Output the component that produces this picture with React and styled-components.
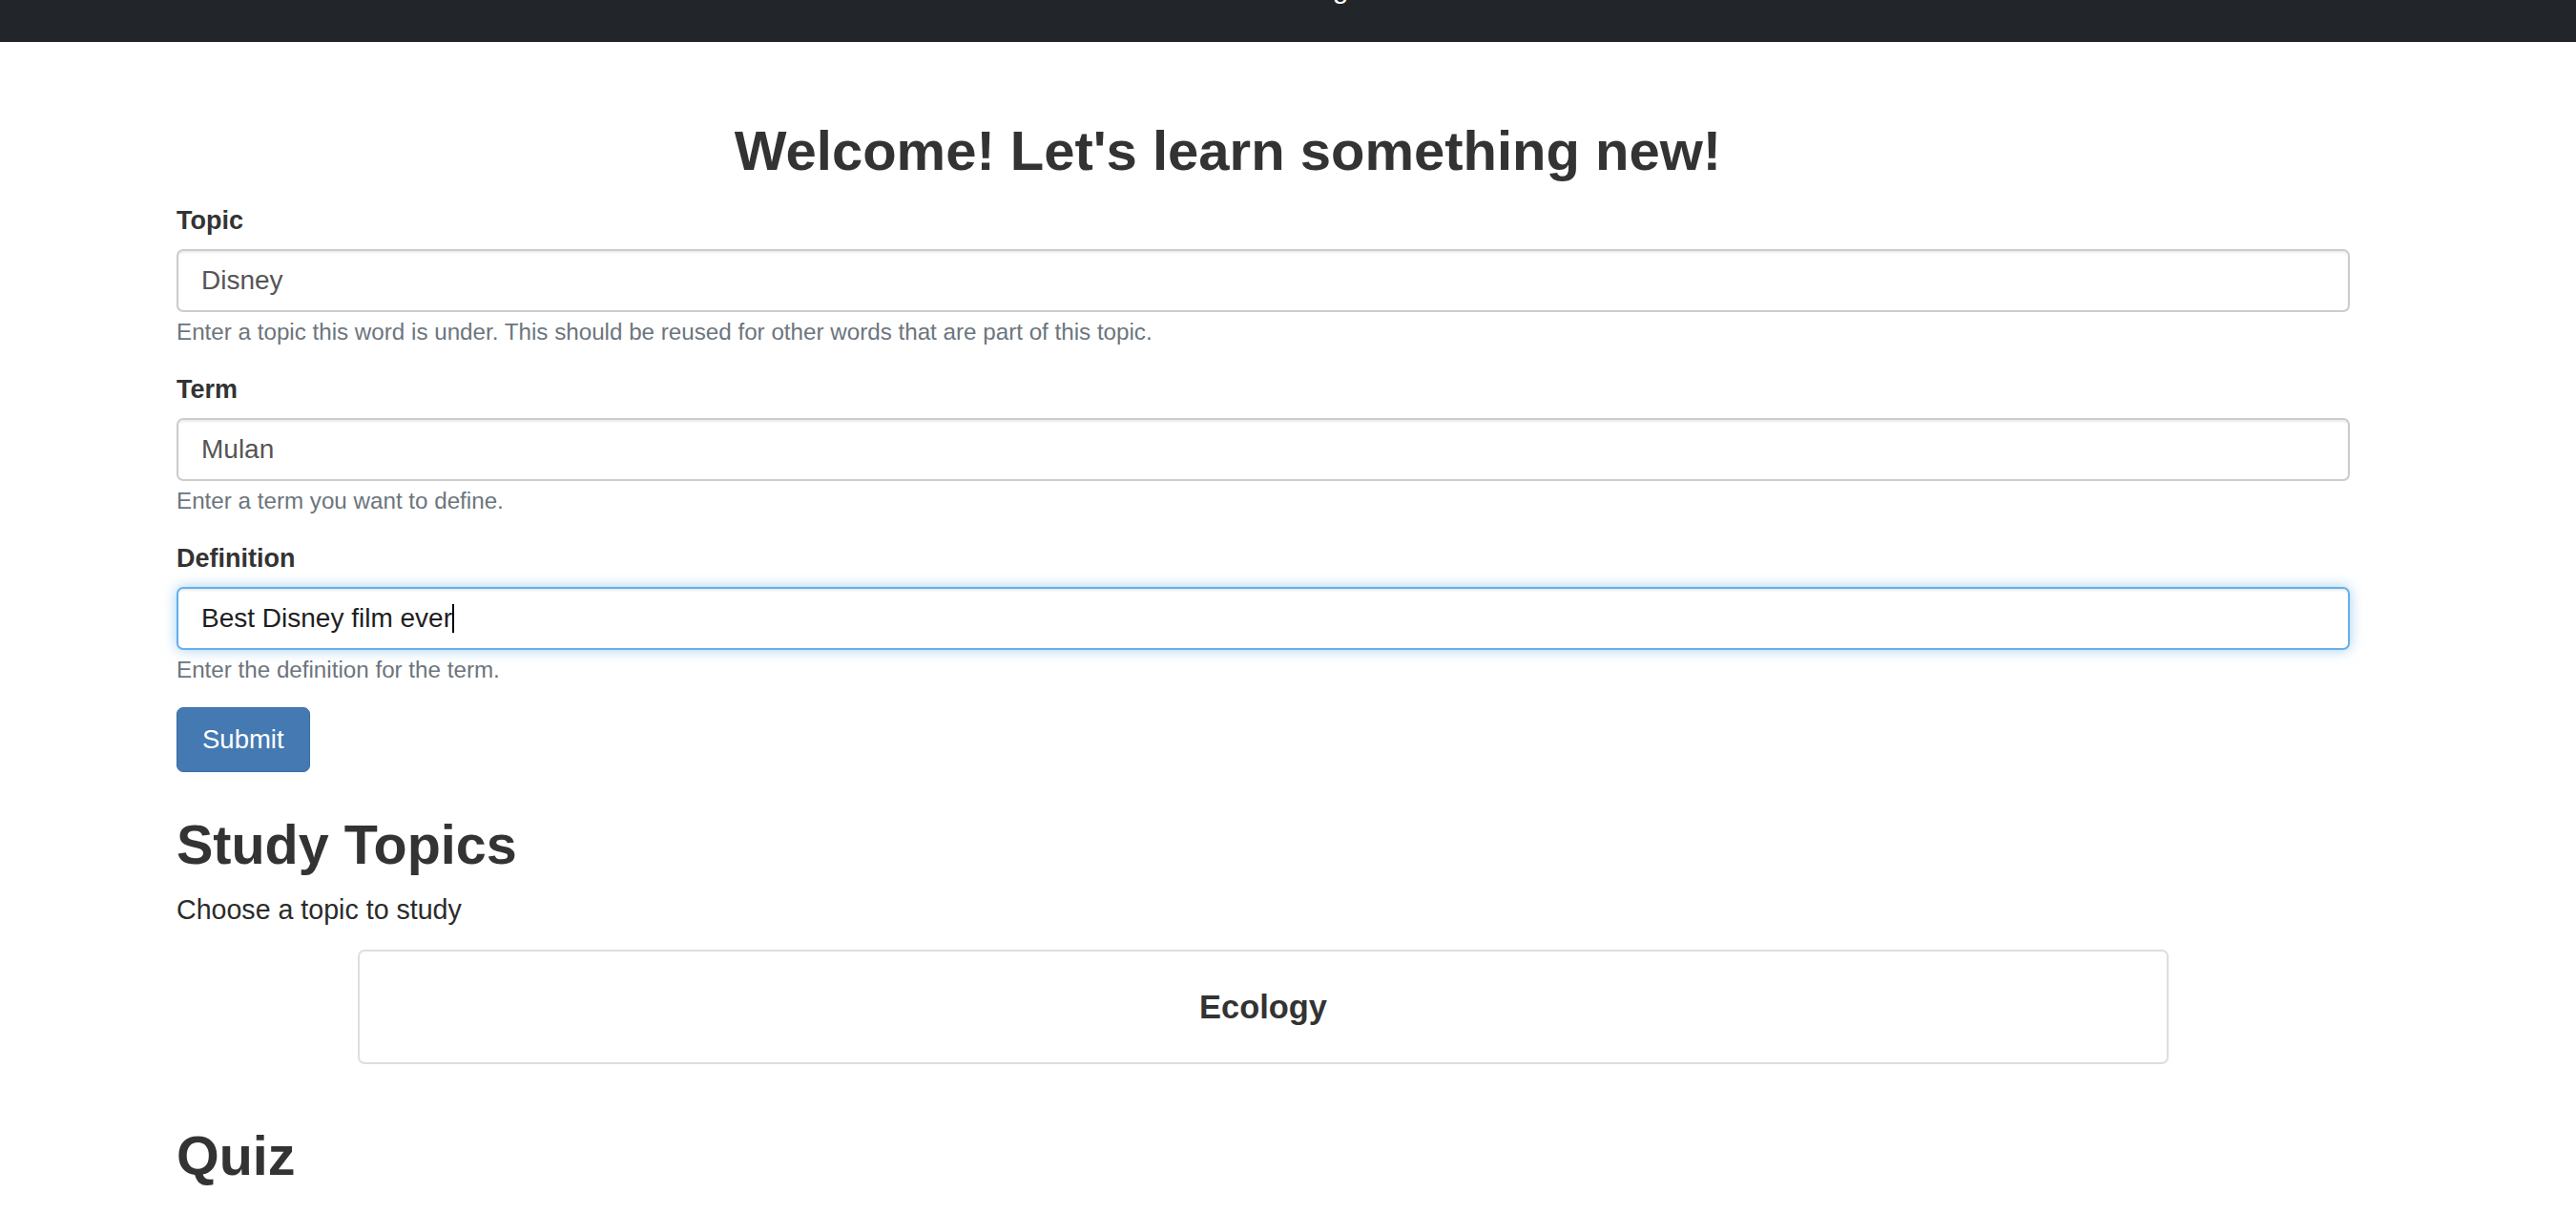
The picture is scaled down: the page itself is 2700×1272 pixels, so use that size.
import React, { useLayoutEffect, useState } from "react";
import styled, { createGlobalStyle, css } from "styled-components";

const FONT = `"Liberation Sans", Arial, Helvetica, sans-serif`;

const GlobalStyle = createGlobalStyle`
  html, body {
    margin: 0;
    padding: 0;
    background: #ffffff;
  }
  body {
    font-family: ${FONT};
    color: #333333;
  }
  * { box-sizing: border-box; }
`;

const NavBar = styled.nav`
  height: 44px;
  background: #222529;
  overflow: hidden;
  display: flex;
  justify-content: center;
`;

const Brand = styled.span`
  font-size: 30px;
  line-height: 30px;
  margin-top: -27px;
  padding-left: 10px;
  color: #ffffff;
  white-space: nowrap;
`;

const Container = styled.main`
  padding: 0 237px 0 185px;
`;

const Title = styled.h1`
  margin: 82px 0 25px;
  padding-right: 74px;
  font-size: 58px;
  line-height: 64px;
  font-weight: 700;
  text-align: center;
  color: #333333;
`;

const Form = styled.form`
  display: flex;
  flex-direction: column;
  align-items: flex-start;
`;

const FormGroup = styled.div`
  width: 100%;
  margin-bottom: 30px;
  &:last-of-type {
    margin-bottom: 25px;
  }
`;

const Label = styled.label`
  display: block;
  margin-bottom: 14px;
  font-size: 27px;
  line-height: 32px;
  font-weight: 700;
  color: #333333;
`;

const InputWrap = styled.div`
  position: relative;
`;

const Input = styled.input`
  display: block;
  width: 100%;
  height: 66px;
  padding: 0 24px;
  font-family: inherit;
  font-size: 28px;
  color: #555555;
  background: #ffffff;
  border: 2px solid #cccccc;
  border-radius: 7px;
  box-shadow: inset 0 2px 2px rgba(0, 0, 0, 0.075);
  outline: none;
  caret-color: transparent;
  ${(p) =>
    p.$focused &&
    css`
      color: #1e1e1e;
      border-color: #66afe9;
      box-shadow: inset 0 2px 2px rgba(0, 0, 0, 0.075),
        0 0 14px rgba(102, 175, 233, 0.6);
    `}
  &:focus {
    border-color: #66afe9;
    box-shadow: inset 0 2px 2px rgba(0, 0, 0, 0.075),
      0 0 14px rgba(102, 175, 233, 0.6);
  }
`;

const Caret = styled.span`
  position: absolute;
  top: 18px;
  width: 2px;
  height: 30px;
  background: #000000;
  pointer-events: none;
`;

const Help = styled.small`
  display: block;
  margin-top: 7px;
  font-size: 24.2px;
  line-height: 28px;
  color: #6c757d;
`;

const SubmitButton = styled.button`
  display: inline-flex;
  align-items: center;
  height: 68px;
  padding: 0 26px;
  font-family: inherit;
  font-size: 27.5px;
  color: #ffffff;
  background: #4479b1;
  border: 1.5px solid #3a6ca3;
  border-radius: 7px;
  cursor: pointer;
`;

const SectionTitle = styled.h1`
  margin: ${(p) => p.$top}px 0 0;
  font-size: 57.5px;
  line-height: 64px;
  font-weight: 700;
  color: #333333;
`;

const Lead = styled.p`
  margin: 19px 0 0;
  font-size: 28.6px;
  line-height: 34px;
  color: #2b2b2b;
`;

const TopicGrid = styled.div`
  display: grid;
  grid-template-columns: repeat(12, 1fr);
  margin-top: 25px;
`;

const TopicCard = styled.button`
  grid-column: 2 / span 10;
  height: 120px;
  display: flex;
  align-items: center;
  justify-content: center;
  background: #ffffff;
  border: 2px solid #dedede;
  border-radius: 7px;
  font-family: inherit;
  cursor: pointer;
`;

const CardTitle = styled.h5`
  margin: 0;
  font-size: 34.4px;
  line-height: 40px;
  font-weight: 700;
  color: #333333;
`;

const fields = [
  {
    id: "topic",
    label: "Topic",
    value: "Disney",
    help: "Enter a topic this word is under. This should be reused for other words that are part of this topic.",
  },
  {
    id: "term",
    label: "Term",
    value: "Mulan",
    help: "Enter a term you want to define.",
  },
  {
    id: "definition",
    label: "Definition",
    value: "Best Disney film ever",
    help: "Enter the definition for the term.",
    focused: true,
  },
];

function measure(text) {
  const c = document.createElement("canvas").getContext("2d");
  c.font = `28px ${FONT}`;
  return c.measureText(text).width;
}

function Field({ f }) {
  const [caretX, setCaretX] = useState(null);
  useLayoutEffect(() => {
    if (f.focused) setCaretX(26 + measure(f.value));
  }, [f]);
  return (
    <FormGroup>
      <Label htmlFor={f.id}>{f.label}</Label>
      <InputWrap>
        <Input
          id={f.id}
          type="text"
          defaultValue={f.value}
          $focused={f.focused}
          autoFocus={f.focused}
        />
        {f.focused && caretX !== null && <Caret style={{ left: caretX }} />}
      </InputWrap>
      <Help>{f.help}</Help>
    </FormGroup>
  );
}

export default function App() {
  return (
    <>
      <GlobalStyle />
      <NavBar>
        <Brand>Learning</Brand>
      </NavBar>
      <Container>
        <Title>Welcome! Let's learn something new!</Title>
        <Form onSubmit={(e) => e.preventDefault()}>
          {fields.map((f) => (
            <Field key={f.id} f={f} />
          ))}
          <SubmitButton type="submit">Submit</SubmitButton>
        </Form>
        <SectionTitle $top={44}>Study Topics</SectionTitle>
        <Lead>Choose a topic to study</Lead>
        <TopicGrid>
          <TopicCard type="button">
            <CardTitle>Ecology</CardTitle>
          </TopicCard>
        </TopicGrid>
        <SectionTitle $top={64}>Quiz</SectionTitle>
      </Container>
    </>
  );
}
